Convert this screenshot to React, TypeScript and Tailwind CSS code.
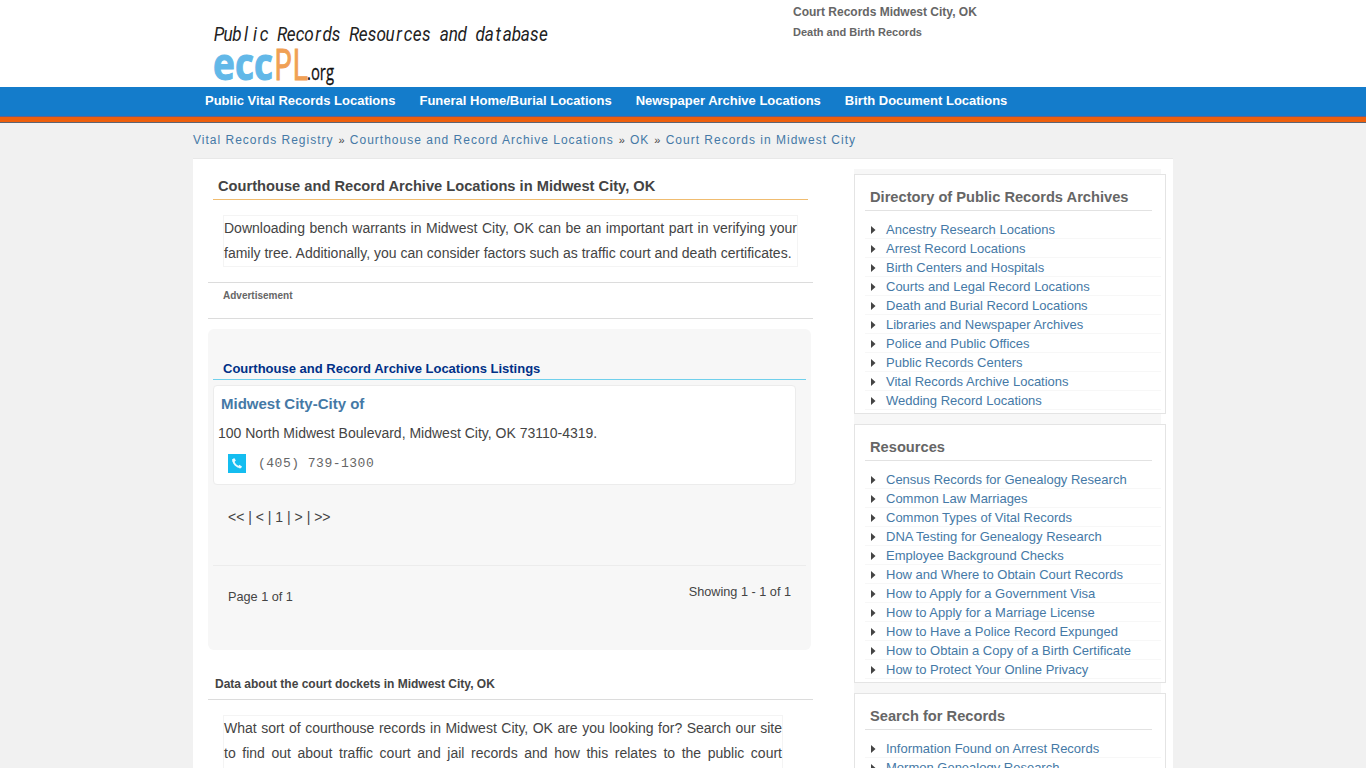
import React from 'react';

interface SidePanelProps {
  title: string;
  links: string[];
}

const NAV_LINKS = [
  'Public Vital Records Locations',
  'Funeral Home/Burial Locations',
  'Newspaper Archive Locations',
  'Birth Document Locations',
];

const BREADCRUMBS = [
  'Vital Records Registry',
  'Courthouse and Record Archive Locations',
  'OK',
  'Court Records in Midwest City',
];

const PANELS: SidePanelProps[] = [
  {
    title: 'Directory of Public Records Archives',
    links: [
      'Ancestry Research Locations',
      'Arrest Record Locations',
      'Birth Centers and Hospitals',
      'Courts and Legal Record Locations',
      'Death and Burial Record Locations',
      'Libraries and Newspaper Archives',
      'Police and Public Offices',
      'Public Records Centers',
      'Vital Records Archive Locations',
      'Wedding Record Locations',
    ],
  },
  {
    title: 'Resources',
    links: [
      'Census Records for Genealogy Research',
      'Common Law Marriages',
      'Common Types of Vital Records',
      'DNA Testing for Genealogy Research',
      'Employee Background Checks',
      'How and Where to Obtain Court Records',
      'How to Apply for a Government Visa',
      'How to Apply for a Marriage License',
      'How to Have a Police Record Expunged',
      'How to Obtain a Copy of a Birth Certificate',
      'How to Protect Your Online Privacy',
    ],
  },
  {
    title: 'Search for Records',
    links: ['Information Found on Arrest Records', 'Mormon Genealogy Research'],
  },
];

const TAGLINE = 'Public Records Resources and database';

// Evenly spaced letters, squeezed to 88% width
const taglineX = TAGLINE.split('').map((_, i) => ((5 + i * 9.01) / 0.88).toFixed(2)).join(' ');

const Logo: React.FC = () => (
  <svg width="350" height="66" viewBox="0 0 350 66" className="block overflow-visible">
    <g transform="scale(0.88 1)">
      <text x={taglineX} y="19" textAnchor="middle" fontFamily="Roboto, sans-serif" fontStyle="italic" fontSize="19.5" fill="#222">
        {TAGLINE}
      </text>
    </g>
    <text x="-1" y="58" fontFamily="Open Sans, sans-serif" fontWeight="700" fontSize="44" fill="#62b8e8" stroke="#62b8e8" strokeWidth="1" textLength="60" lengthAdjust="spacingAndGlyphs">
      ecc
    </text>
    <text x="60" y="58" fontFamily="Open Sans, sans-serif" fontWeight="500" fontSize="44" fill="#f0a055" stroke="#f0a055" strokeWidth="1" textLength="34" lengthAdjust="spacingAndGlyphs">
      PL
    </text>
    <text x="93" y="58" fontFamily="Open Sans, sans-serif" fontSize="21" fill="#111" stroke="#111" strokeWidth="0.3" textLength="27" lengthAdjust="spacingAndGlyphs">
      .org
    </text>
  </svg>
);

const PhoneIcon: React.FC = () => (
  <svg width="18" height="19" viewBox="0 0 18 19" className="block shrink-0">
    <rect width="18" height="19" fill="#14bdf0" />
    <path d="M5.2 5.2 C5.2 9.6 8.4 13 13 13.2" fill="none" stroke="#e9faff" strokeWidth="1.8" />
    <path d="M4.2 5.4 L6.2 4 L7.9 6.6 L6.2 8 L4.6 8 Z M10.2 12.4 L11.3 10.8 L14 12.4 L13 14.3 L11 14.2 Z" fill="#e9faff" />
  </svg>
);

const SidePanel: React.FC<SidePanelProps> = ({ title, links }) => (
  <section className="mb-2.5 w-[312px] border border-[#e4e4e4] bg-white px-2.5 pt-2.5">
    <h3 className="mb-[9px] h-[26px] w-[287px] border-b border-[#e2e2e2] pl-[5px] text-[14.67px] leading-[24px] font-bold text-[#666]">
      {title}
    </h3>
    <ul className="w-[296px] pb-[3px]">
      {links.map(link => (
        <li key={link} className="flex h-[19px] items-center border-b border-[#f7f7f7] pl-1.5 whitespace-nowrap">
          <svg width="5" height="8" viewBox="0 0 5 8" className="mt-0.5 mr-2.5 shrink-0">
            <path d="M0 0 L4.5 4 L0 8 Z" fill="#444" />
          </svg>
          <a href="#" className="pt-0.5 text-[13px] leading-[18px] text-[#4579a6]">{link}</a>
        </li>
      ))}
    </ul>
  </section>
);

export default function App() {
  return (
    <div className="h-screen overflow-hidden bg-[#f1f1f1] font-['Liberation_Sans',Arial,sans-serif] text-[#444]">
      <header className="h-[87px] bg-white">
        <div className="mx-auto flex w-[980px]">
          <div className="w-[600px] pt-[22px] pl-[21px]">
            <Logo />
          </div>
          <div className="pt-1 font-bold text-[#666]">
            <p className="text-[12px] leading-[16px]">Court Records Midwest City, OK</p>
            <p className="mt-1 text-[11px] leading-[16px]">Death and Birth Records</p>
          </div>
        </div>
      </header>

      <nav className="h-[30px] border-b border-[#67618a] bg-[#147ccb]">
        <div className="mx-auto flex w-[980px] gap-6 pl-3">
          {NAV_LINKS.map(link => (
            <a key={link} href="#" className="text-[13px] leading-[27px] font-bold whitespace-nowrap text-white">{link}</a>
          ))}
        </div>
      </nav>
      <div className="h-1.5 border-b border-[#5d6473] bg-[#ee5f0c]" />

      <div className="mx-auto w-[980px]">
        <div className="flex h-[35px] gap-[5px] text-[12px] leading-[34px] tracking-[1px] whitespace-nowrap">
          {BREADCRUMBS.map((crumb, index) => (
            <React.Fragment key={crumb}>
              {index > 0 && <span className="text-[11px] tracking-[0.2px]">»</span>}
              <a href="#" className="text-[#4579a6]">{crumb}</a>
            </React.Fragment>
          ))}
        </div>

        <div className="flex h-[640px] border-t border-[#e8e8e8] bg-white pl-[15px]">
          <main className="w-[605px] shrink-0">
            <h1 className="mt-4 ml-[5px] h-[25px] w-[595px] border-b border-[#f0bc70] pl-[5px] text-[14.67px] leading-[22px] font-bold text-[#444]">
              Courthouse and Record Archive Locations in Midwest City, OK
            </h1>
            <p className="mt-[15px] ml-[15px] h-[52px] w-[575px] border border-[#f4f4f4] text-justify text-[14px] leading-[25px]">
              Downloading bench warrants in Midwest City, OK can be an important part in verifying your family tree. Additionally, you can consider factors such as traffic court and death certificates.
            </p>
            <div className="mt-[15px] h-[37px] border-y border-[#dcdcdc] pl-[15px] text-[10px] leading-[26px] font-bold text-[#666]">
              Advertisement
            </div>

            <section className="mt-2.5 h-[321px] w-[603px] rounded-md bg-[#f7f7f7] px-[5px] pt-[29px]">
              <h2 className="h-[22px] w-[593px] border-b border-[#70d0ec] pl-2.5 text-[13px] leading-[21px] font-bold text-[#003087]">
                Courthouse and Record Archive Locations Listings
              </h2>
              <article className="mt-[5px] h-[100px] w-[583px] rounded-[4px] border border-[#ececec] bg-white">
                <h3 className="pt-2 pl-[7px] text-[15px] leading-[20px] font-bold text-[#4579a6]">Midwest City-City of</h3>
                <p className="mt-[9px] pl-1 text-[14px] leading-[20px]">100 North Midwest Boulevard, Midwest City, OK 73110-4319.</p>
                <div className="mt-2.5 flex items-center pl-3.5">
                  <PhoneIcon />
                  <span className="ml-3 pt-px font-['Liberation_Mono',monospace] text-[13px] leading-[19px] tracking-[0.5px] text-[#666]">(405) 739-1300</span>
                </div>
              </article>
              <div className="flex h-[81px] items-start border-b border-[#ececec] pt-[22px] pl-[15px] text-[14px] leading-[20px]">
                &lt;&lt; | &lt; | 1 | &gt; | &gt;&gt;
              </div>
              <div className="flex justify-between pr-[15px] pl-[15px] text-[12.7px] leading-[20px]">
                <span className="pt-[21px]">Page 1 of 1</span>
                <span className="pt-4">Showing 1 - 1 of 1</span>
              </div>
            </section>

            <h2 className="mt-[22px] h-[28px] border-b border-[#dcdcdc] pl-[7px] text-[12px] leading-[24px] font-bold">
              Data about the court dockets in Midwest City, OK
            </h2>
            <p className="mt-[15px] ml-[15px] w-[560px] border border-[#f4f4f4] text-justify text-[14px] leading-[25px]">
              What sort of courthouse records in Midwest City, OK are you looking for? Search our site to find out about traffic court and jail records and how this relates to the public court system.
            </p>
          </main>

          <aside className="mt-2.5 ml-[41px] w-[307px] bg-[#f7f7f7] pt-[5px]">
            {PANELS.map(panel => (
              <SidePanel key={panel.title} title={panel.title} links={panel.links} />
            ))}
          </aside>
        </div>
      </div>
    </div>
  );
}
